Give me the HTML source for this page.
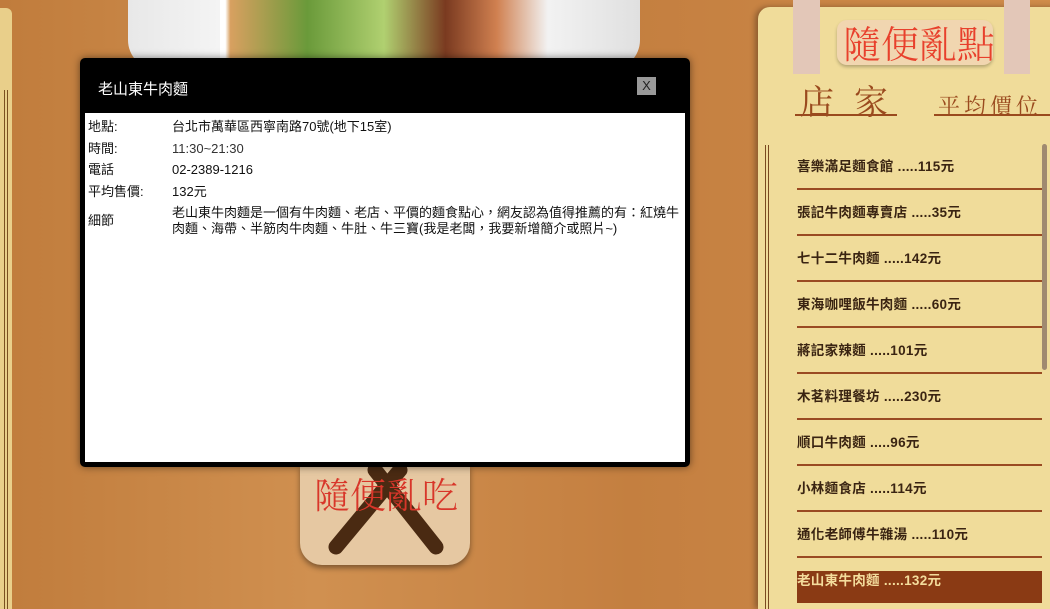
<!DOCTYPE html>
<html><head><meta charset="utf-8"><style>
body{margin:0;width:1050px;height:609px;overflow:hidden;position:relative;background:linear-gradient(90deg,#c07c3c,#d09050 30%,#c47f40 60%,#cf8c4a);font-family:"Liberation Sans","Noto Sans CJK TC",sans-serif}
.abs{position:absolute}
.list div{position:absolute;left:797px;width:245px;height:46px;border-bottom:2px solid #9a4a22;font-size:13.5px;font-weight:bold;color:#3a2412;line-height:46px;box-sizing:border-box;letter-spacing:0.3px}
.row{display:flex;font-size:13px;color:#111;line-height:21.5px}
.row span:first-child{width:84px;flex:none}
</style></head><body>
<div class="abs" style="left:0;top:8px;width:12px;height:601px;background:#e9cf8a;border-radius:0 6px 0 0"></div>
<div class="abs" style="left:4px;top:90px;width:1px;height:519px;background:#7a5020"></div>
<div class="abs" style="left:7px;top:90px;width:1px;height:519px;background:#7a5020"></div>
<div class="abs" style="left:128px;top:0;width:512px;height:70px;background:linear-gradient(90deg,#e8e8e8,#f4f4f4 18%,#fff 18%,#fff 19%,#d8a060 20%,#6a9a3a 35%,#b0d070 50%,#7a3a20 62%,#d08050 72%,#f2f2f2 82%,#e0e0e0);border-radius:0 0 30px 30px"></div>
<div class="abs" style="left:300px;top:465px;width:170px;height:100px;background:#e6c8a2;border-radius:0 0 22px 22px;box-shadow:0 3px 6px rgba(0,0,0,.4)"></div>
<svg class="abs" style="left:300px;top:465px" width="170" height="100"><path d="M36 82 L100 5 M75 5 L136 82" stroke="#4a2a12" stroke-width="15" stroke-linecap="round"/></svg>
<div class="abs" style="left:314px;top:468px;font-size:36px;color:#d8362a;font-family:'Noto Serif CJK SC',serif;font-weight:300">隨便亂吃</div>
<div class="abs" style="left:758px;top:7px;width:300px;height:602px;background:#f0dc9a;border-radius:12px 0 0 0;box-shadow:-3px 0 6px rgba(0,0,0,.3)"></div>
<div class="abs" style="left:793px;top:0;width:27px;height:74px;background:#e3c7b8"></div>
<div class="abs" style="left:1004px;top:0;width:26px;height:74px;background:#e3c7b8"></div>
<div class="abs" style="left:837px;top:20px;width:156px;height:45px;background:#f1d6b0;border-radius:10px;box-shadow:0 2px 3px rgba(0,0,0,.25)"></div>
<div class="abs" style="left:843px;top:19px;font-size:38px;color:#e8402c;font-family:'Noto Serif CJK SC',serif;font-weight:300;line-height:46px">隨便亂點</div>
<div class="abs" style="left:800px;top:80px;font-size:34px;color:#9a4a1e;font-family:'Noto Serif CJK SC',serif;letter-spacing:20px;line-height:40px">店家</div>
<div class="abs" style="left:795px;top:114px;width:102px;height:2px;background:#9a4a1e"></div>
<div class="abs" style="left:938px;top:90px;font-size:22px;color:#9a4a1e;font-family:'Noto Serif CJK SC',serif;letter-spacing:4px">平均價位</div>
<div class="abs" style="left:934px;top:114px;width:116px;height:2px;background:#9a4a1e"></div>
<div class="abs" style="left:765px;top:145px;width:1px;height:464px;background:#7a4a20"></div>
<div class="abs" style="left:768px;top:145px;width:1px;height:464px;background:#7a4a20"></div>
<div class="abs" style="left:1042px;top:144px;width:5px;height:226px;background:#a08a70;border-radius:3px"></div>
<div class="list">
<div style="top:144px">喜樂滿足麵食館 .....115元</div>
<div style="top:190px">張記牛肉麵專賣店 .....35元</div>
<div style="top:236px">七十二牛肉麵 .....142元</div>
<div style="top:282px">東海咖哩飯牛肉麵 .....60元</div>
<div style="top:328px">蔣記家辣麵 .....101元</div>
<div style="top:374px">木茗料理餐坊 .....230元</div>
<div style="top:420px">順口牛肉麵 .....96元</div>
<div style="top:466px">小林麵食店 .....114元</div>
<div style="top:512px">通化老師傅牛雜湯 .....110元</div>
<div style="top:571px;height:32px;line-height:20px;background:#8a3a14;color:#f4dc9c;border:none">老山東牛肉麵 .....132元</div>
</div>
<div class="abs" style="left:80px;top:58px;width:610px;height:409px;background:#000;border-radius:5px;box-shadow:0 0 8px rgba(0,0,0,.5)"></div>
<div class="abs" style="left:98px;top:78px;font-size:15px;color:#fff">老山東牛肉麵</div>
<div class="abs" style="left:637px;top:77px;width:19px;height:18px;background:#999;color:#222;font-size:13px;text-align:center;line-height:18px">X</div>
<div class="abs" style="left:85px;top:113px;width:600px;height:349px;background:#fff;padding:3px 0 0 3px;box-sizing:border-box">
<div class="row"><span>地點:</span><span>台北市萬華區西寧南路70號(地下15室)</span></div>
<div class="row"><span>時間:</span><span style="color:#333">11:30~21:30</span></div>
<div class="row"><span>電話</span><span>02-2389-1216</span></div>
<div class="row"><span>平均售價:</span><span>132元</span></div>
<div class="row" style="line-height:16px;margin-top:3px;align-items:center"><span>細節</span><span>老山東牛肉麵是一個有牛肉麵、老店、平價的麵食點心，網友認為值得推薦的有：紅燒牛肉麵、海帶、半筋肉牛肉麵、牛肚、牛三寶(我是老闆，我要新增簡介或照片~)</span></div>
</div>
</body></html>
